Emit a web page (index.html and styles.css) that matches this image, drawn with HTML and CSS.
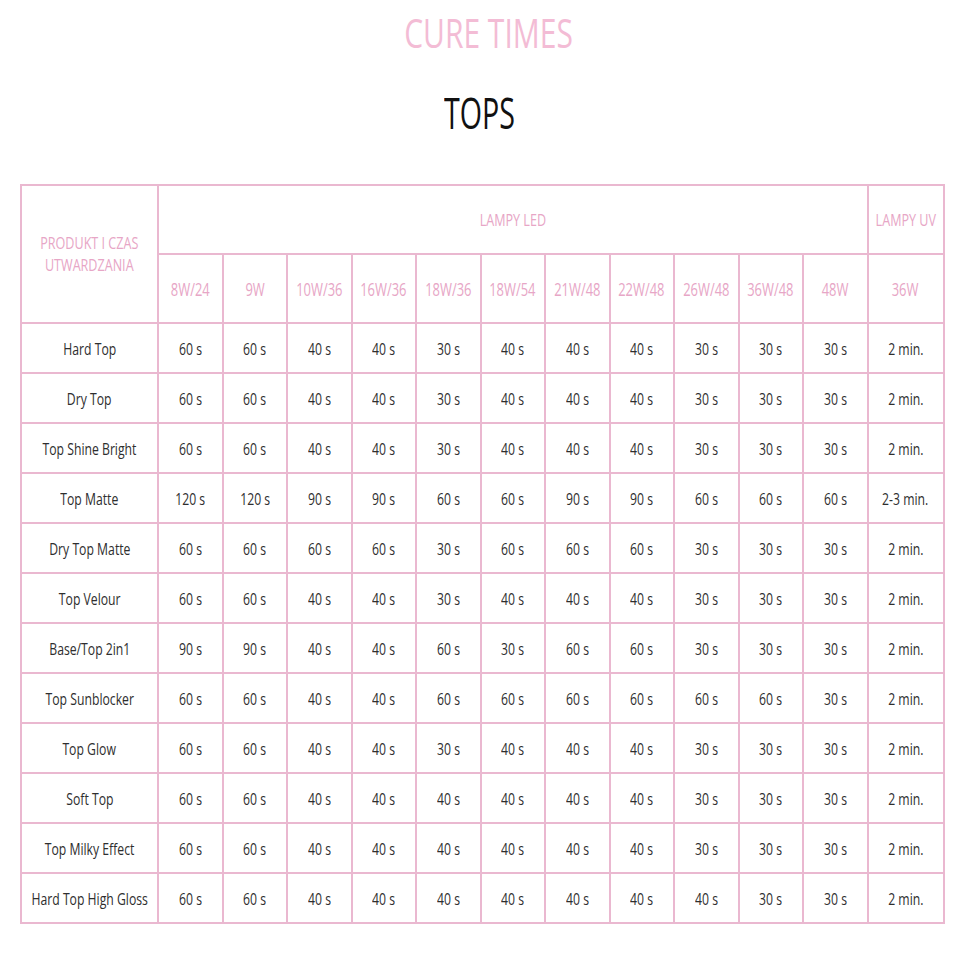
FILE: index.html
```html
<!DOCTYPE html>
<html>
<head>
<meta charset="utf-8">
<link rel="stylesheet" href="styles.css">
</head>
<body>
<h1 class="title"><span class="sq">CURE TIMES</span></h1>
<h2 class="subtitle"><span class="sq">TOPS</span></h2>
<table class="cure">
<colgroup>
<col class="c-name"><col class="c"><col class="c"><col class="c"><col class="c"><col class="c"><col class="c"><col class="c"><col class="c"><col class="c"><col class="c"><col class="c"><col class="c-uv">
</colgroup>
<thead>
<tr class="h1">
<th rowspan="2" class="hp"><span class="sq">PRODUKT I CZAS<br>UTWARDZANIA</span></th>
<th colspan="11" class="hp"><span class="sq">LAMPY LED</span></th>
<th class="hp"><span class="sq">LAMPY UV</span></th>
</tr>
<tr class="h2">
<th><span class="sq">8W/24</span></th><th><span class="sq">9W</span></th><th><span class="sq">10W/36</span></th><th><span class="sq">16W/36</span></th><th><span class="sq">18W/36</span></th><th><span class="sq">18W/54</span></th><th><span class="sq">21W/48</span></th><th><span class="sq">22W/48</span></th><th><span class="sq">26W/48</span></th><th><span class="sq">36W/48</span></th><th><span class="sq">48W</span></th><th><span class="sq">36W</span></th>
</tr>
</thead>
<tbody id="body"></tbody>
</table>
<script src="app.js"></script>
</body>
</html>
```
FILE: app.js
```js
var rows = [
["Hard Top","60 s","60 s","40 s","40 s","30 s","40 s","40 s","40 s","30 s","30 s","30 s","2 min."],
["Dry Top","60 s","60 s","40 s","40 s","30 s","40 s","40 s","40 s","30 s","30 s","30 s","2 min."],
["Top Shine Bright","60 s","60 s","40 s","40 s","30 s","40 s","40 s","40 s","30 s","30 s","30 s","2 min."],
["Top Matte","120 s","120 s","90 s","90 s","60 s","60 s","90 s","90 s","60 s","60 s","60 s","2-3 min."],
["Dry Top Matte","60 s","60 s","60 s","60 s","30 s","60 s","60 s","60 s","30 s","30 s","30 s","2 min."],
["Top Velour","60 s","60 s","40 s","40 s","30 s","40 s","40 s","40 s","30 s","30 s","30 s","2 min."],
["Base/Top 2in1","90 s","90 s","40 s","40 s","60 s","30 s","60 s","60 s","30 s","30 s","30 s","2 min."],
["Top Sunblocker","60 s","60 s","40 s","40 s","60 s","60 s","60 s","60 s","60 s","60 s","30 s","2 min."],
["Top Glow","60 s","60 s","40 s","40 s","30 s","40 s","40 s","40 s","30 s","30 s","30 s","2 min."],
["Soft Top","60 s","60 s","40 s","40 s","40 s","40 s","40 s","40 s","30 s","30 s","30 s","2 min."],
["Top Milky Effect","60 s","60 s","40 s","40 s","40 s","40 s","40 s","40 s","30 s","30 s","30 s","2 min."],
["Hard Top High Gloss","60 s","60 s","40 s","40 s","40 s","40 s","40 s","40 s","40 s","30 s","30 s","2 min."]
];
var tb = document.getElementById("body");
rows.forEach(function(r){
  var tr = document.createElement("tr");
  r.forEach(function(v){
    var td = document.createElement("td");
    var s = document.createElement("span");
    s.className = "sq";
    s.textContent = v;
    td.appendChild(s);
    tr.appendChild(td);
  });
  tb.appendChild(tr);
});
```
FILE: styles.css
```css
html, body {
  margin: 0;
  padding: 0;
  background: #ffffff;
}
body {
  font-family: "Open Sans", "Noto Sans", sans-serif;
  width: 960px;
}
.sq {
  display: inline-block;
  transform: scaleX(0.74);
  white-space: nowrap;
  margin: 0 -40px;
}
.title {
  margin: 0;
  padding-top: 8px;
  height: 50px;
  text-align: center;
  font-weight: 400;
  font-size: 40px;
  line-height: 50px;
  color: #f3bcd5;
  padding-left: 16px;
}
.title .sq { transform: scaleX(0.75); }
.subtitle {
  margin: 0;
  padding-top: 25px;
  height: 58px;
  text-align: center;
  font-weight: 400;
  font-size: 44px;
  line-height: 58px;
  color: #111111;
  padding-left: 0px;
}
.subtitle .sq { transform: scaleX(0.65); }
.cure {
  margin: 43px 0 0 20px;
  border-collapse: collapse;
  table-layout: fixed;
  width: 923px;
}
.c-name { width: 137px; }
.c { width: 64.5px; }
.c-uv { width: 76px; }
.cure th, .cure td {
  border: 2px solid #eab8d0;
  text-align: center;
  padding: 0;
  font-weight: 400;
}
.cure th {
  color: #e7a6c6;
  font-size: 17.5px;
}
.h1 th { height: 67px; }
.h1 th.hp { font-size: 17px; line-height: 22px; }
.h1 th:first-child { vertical-align: middle; }
.h2 th { height: 67px; }
.cure td {
  height: 48px;
  color: #2e2e2e;
  font-size: 16.5px;
}
```
